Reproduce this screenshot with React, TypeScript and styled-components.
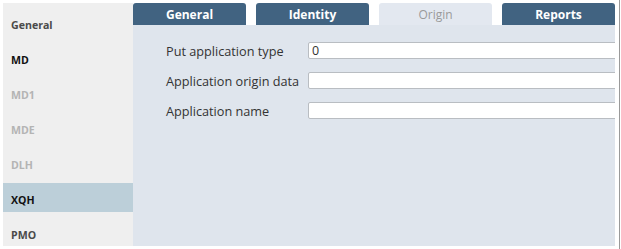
import React from 'react';
import styled, { createGlobalStyle } from 'styled-components';

const GlobalStyle = createGlobalStyle`
  html, body {
    margin: 0;
    padding: 0;
    background: #ffffff;
  }
  body {
    font-family: 'Open Sans', 'Noto Sans', sans-serif;
  }
`;

const Frame = styled.div`
  width: 620px;
  height: 249px;
  box-sizing: border-box;
  padding: 3px 4px 3px 3px;
  border-right: 1px solid #9a9a9a;
  display: flex;
`;

const Sidebar = styled.nav`
  width: 131px;
  height: 243px;
  background: #efefef;
  display: flex;
  flex-direction: column;
  gap: 6px;
  padding-top: 5px;
  box-sizing: border-box;
  overflow: hidden;
`;

const SideItem = styled.div<{ $tone: 'dark' | 'strong' | 'muted'; $active?: boolean }>`
  height: 29px;
  flex-shrink: 0;
  display: flex;
  align-items: center;
  padding: 5px 0 0 8px;
  box-sizing: border-box;
  font-size: 10.6px;
  font-weight: 700;
  background: ${(p) => (p.$active ? '#bccfd9' : 'transparent')};
  color: ${(p) => (p.$tone === 'strong' ? '#111111' : p.$tone === 'muted' ? '#b4b4b4' : '#4a4a4a')};
`;

const Main = styled.div`
  flex: 1;
  display: flex;
  flex-direction: column;
`;

const TabBar = styled.div`
  display: flex;
  gap: 10px;
  height: 22px;
`;

const Tab = styled.div<{ $active?: boolean }>`
  width: 113px;
  height: 22px;
  border-radius: 3px 3px 0 0;
  display: flex;
  align-items: center;
  justify-content: center;
  padding-top: 1px;
  box-sizing: border-box;
  font-size: 12px;
  font-weight: ${(p) => (p.$active ? 400 : 700)};
  background: ${(p) => (p.$active ? '#e3e8f0' : '#416381')};
  color: ${(p) => (p.$active ? '#9a9a9a' : '#ffffff')};
`;

const Panel = styled.div`
  flex: 1;
  background: #dfe5ed;
  padding: 15px 0 0 33px;
  overflow: hidden;
  display: flex;
  flex-direction: column;
  gap: 13px;
`;

const FieldRow = styled.div`
  display: grid;
  grid-template-columns: 142px 1fr;
  align-items: center;
  height: 17px;
`;

const Label = styled.label`
  font-size: 12.7px;
  color: #333333;
  padding-top: 2px;
`;

const Input = styled.input`
  width: calc(100% + 6px);
  height: 17px;
  box-sizing: border-box;
  border: 1px solid #b9bdc2;
  border-radius: 2px;
  background: #ffffff;
  padding: 0 3px;
  font-family: 'Open Sans', 'Noto Sans', sans-serif;
  font-size: 12.5px;
  color: #333333;
  outline: none;
`;

const sideItems: { name: string; tone: 'dark' | 'strong' | 'muted'; active?: boolean }[] = [
  { name: 'General', tone: 'dark' },
  { name: 'MD', tone: 'strong' },
  { name: 'MD1', tone: 'muted' },
  { name: 'MDE', tone: 'muted' },
  { name: 'DLH', tone: 'muted' },
  { name: 'XQH', tone: 'strong', active: true },
  { name: 'PMO', tone: 'dark' },
];

const tabs = ['General', 'Identity', 'Origin', 'Reports'];

const fields = [
  { label: 'Put application type', value: '0' },
  { label: 'Application origin data', value: '' },
  { label: 'Application name', value: '' },
];

const App: React.FC = () => {
  return (
    <>
      <GlobalStyle />
      <Frame>
        <Sidebar>
          {sideItems.map((item) => (
            <SideItem key={item.name} $tone={item.tone} $active={item.active}>
              {item.name}
            </SideItem>
          ))}
        </Sidebar>
        <Main>
          <TabBar>
            {tabs.map((t) => (
              <Tab key={t} $active={t === 'Origin'}>
                {t}
              </Tab>
            ))}
          </TabBar>
          <Panel>
            {fields.map((f) => (
              <FieldRow key={f.label}>
                <Label>{f.label}</Label>
                <Input defaultValue={f.value} />
              </FieldRow>
            ))}
          </Panel>
        </Main>
      </Frame>
    </>
  );
};

export default App;
